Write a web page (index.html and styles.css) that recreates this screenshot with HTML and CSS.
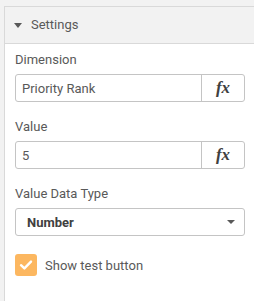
FILE: index.html
```html
<!DOCTYPE html>
<html>
<head>
<meta charset="utf-8">
<link rel="stylesheet" href="styles.css">
</head>
<body>
<div class="panel">
  <div class="header">
    <span class="caret"></span>
    <span class="title">Settings</span>
  </div>
  <div class="content">
    <div class="field">
      <div class="label">Dimension</div>
      <div class="input">
        <span class="value">Priority Rank</span>
        <span class="fx">fx</span>
      </div>
    </div>
    <div class="field">
      <div class="label">Value</div>
      <div class="input">
        <span class="value">5</span>
        <span class="fx">fx</span>
      </div>
    </div>
    <div class="field">
      <div class="label">Value Data Type</div>
      <div class="select">
        <span class="sel-value">Number</span>
        <span class="sel-arrow"></span>
      </div>
    </div>
    <label class="check">
      <span class="box">
        <svg width="14" height="12" viewBox="0 0 14 12"><path d="M2 6.2 L5.4 9.4 L12 2.6" fill="none" stroke="#ffffff" stroke-width="2.4" stroke-linecap="round" stroke-linejoin="round"/></svg>
      </span>
      <span class="check-label">Show test button</span>
    </label>
  </div>
</div>
</body>
</html>
```

FILE: styles.css
```css
html, body {
  margin: 0;
  padding: 0;
}
body {
  background: #f2f2f2;
  font-family: Roboto, "Noto Sans", sans-serif;
  color: #595959;
  width: 254px;
  height: 301px;
  overflow: hidden;
}
.panel {
  margin-left: 4px;
  margin-top: 6px;
  border-left: 1px solid #d9d9d9;
  border-top: 1px solid #d9d9d9;
  background: #ffffff;
  height: 300px;
}
.header {
  height: 37px;
  box-sizing: border-box;
  background: #f2f2f2;
  border-bottom: 1px solid #d9d9d9;
  display: flex;
  align-items: center;
  padding-left: 9px;
}
.caret {
  width: 0;
  height: 0;
  border-left: 4px solid transparent;
  border-right: 4px solid transparent;
  border-top: 5px solid #595959;
  margin-right: 9px;
  margin-top: 1px;
}
.title {
  font-size: 13px;
  color: #595959;
  line-height: 16px;
}
.content {
  padding: 8px 9px 0 10px;
}
.field {
  margin-bottom: 17px;
}
.label {
  font-size: 13px;
  line-height: 16px;
  margin-bottom: 6px;
  color: #595959;
}
.input, .select {
  height: 28px;
  box-sizing: border-box;
  border: 1px solid #c4c4c4;
  border-radius: 3px;
  display: flex;
  align-items: center;
  background: #fff;
}
.input .value {
  flex: 1;
  padding-left: 6px;
  font-size: 13px;
  color: #595959;
}
.fx {
  width: 42px;
  height: 100%;
  border-left: 1px solid #c4c4c4;
  display: flex;
  align-items: center;
  justify-content: center;
  font-family: "Liberation Serif", serif;
  font-style: italic;
  font-weight: bold;
  font-size: 17px;
  color: #404040;
}
.select {
  justify-content: space-between;
  padding: 0 9px 0 11px;
}
.sel-value {
  font-size: 13px;
  font-weight: bold;
  color: #404040;
}
.sel-arrow {
  width: 0;
  height: 0;
  border-left: 4px solid transparent;
  border-right: 4px solid transparent;
  border-top: 4px solid #595959;
}
.check {
  display: flex;
  align-items: center;
  margin-top: 18px;
}
.box {
  width: 22px;
  height: 22px;
  border-radius: 3px;
  background: #fcb760;
  display: flex;
  align-items: center;
  justify-content: center;
  margin-right: 8px;
}
.box svg {
  display: block;
}
.check-label {
  font-size: 13px;
  color: #595959;
}
```
